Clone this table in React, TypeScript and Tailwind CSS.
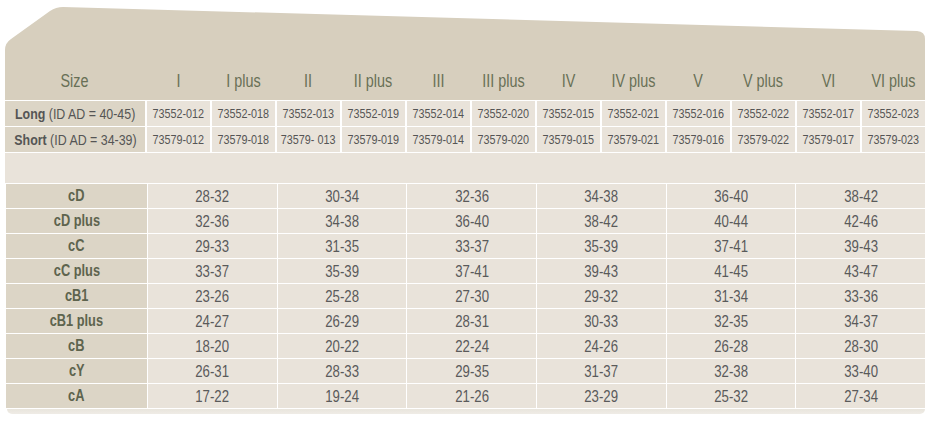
import React from "react";

const headers = ["I", "I plus", "II", "II plus", "III", "III plus", "IV", "IV plus", "V", "V plus", "VI", "VI plus"];
const longCodes = ["73552-012", "73552-018", "73552-013", "73552-019", "73552-014", "73552-020", "73552-015", "73552-021", "73552-016", "73552-022", "73552-017", "73552-023"];
const shortCodes = ["73579-012", "73579-018", "73579- 013", "73579-019", "73579-014", "73579-020", "73579-015", "73579-021", "73579-016", "73579-022", "73579-017", "73579-023"];

const rows: [string, string[]][] = [
  ["cD", ["28-32", "30-34", "32-36", "34-38", "36-40", "38-42"]],
  ["cD plus", ["32-36", "34-38", "36-40", "38-42", "40-44", "42-46"]],
  ["cC", ["29-33", "31-35", "33-37", "35-39", "37-41", "39-43"]],
  ["cC plus", ["33-37", "35-39", "37-41", "39-43", "41-45", "43-47"]],
  ["cB1", ["23-26", "25-28", "27-30", "29-32", "31-34", "33-36"]],
  ["cB1 plus", ["24-27", "26-29", "28-31", "30-33", "32-35", "34-37"]],
  ["cB", ["18-20", "20-22", "22-24", "24-26", "26-28", "28-30"]],
  ["cY", ["26-31", "28-33", "29-35", "31-37", "32-38", "33-40"]],
  ["cA", ["17-22", "19-24", "21-26", "23-29", "25-32", "27-34"]],
];

function C({ children }: { children: React.ReactNode }) {
  return <span className="inline-block scale-x-[0.8] whitespace-pre">{children}</span>;
}

export default function App() {
  return (
    <div
      className="w-[934px] h-[423px] bg-white overflow-hidden"
      style={{ fontFamily: '"Liberation Sans", Arial, sans-serif' }}
    >
      <div className="ml-[5px] w-[920px] flex flex-col gap-y-px">
        {/* Header */}
        <div className="relative h-[100px]">
          <svg className="absolute inset-0" width="920" height="100" viewBox="0 0 920 100">
            <path
              d="M0,100 L0,50 Q0,43 6,39 L45,11 Q51,7 58,7 L912,31 Q920,31.5 920,39 L920,100 Z"
              fill="#d7cfbe"
            />
          </svg>
          <div className="relative h-full grid grid-cols-[140px_repeat(12,minmax(0,1fr))] gap-x-[2px] items-end pb-[8px] text-[18px] leading-[22px] text-[#687056]">
            <div className="min-w-0 flex justify-center"><C>Size</C></div>
            {headers.map((h) => (
              <div key={h} className="min-w-0 flex justify-center"><C>{h}</C></div>
            ))}
          </div>
        </div>

        {/* Codes */}
        <div className="grid grid-cols-[140px_repeat(12,minmax(0,1fr))] grid-rows-[25px] gap-x-[2px] h-[25px] leading-[20px]">
          <div className="min-w-0 bg-[#dcd5c6] flex items-center justify-center text-[15.5px] text-[#555]">
            <C><span className="font-bold">Long</span> (ID AD = 40-45)</C>
          </div>
          {longCodes.map((c, i) => (
            <div key={i} className="min-w-0 bg-[#e9e3da] flex items-center justify-center text-[13.5px] text-[#555]"><C>{c}</C></div>
          ))}
        </div>
        <div className="grid grid-cols-[140px_repeat(12,minmax(0,1fr))] grid-rows-[25px] gap-x-[2px] h-[25px] leading-[20px]">
          <div className="min-w-0 bg-[#dcd5c6] flex items-center justify-center text-[15.5px] text-[#555]">
            <C><span className="font-bold">Short</span> (ID AD = 34-39)</C>
          </div>
          {shortCodes.map((c, i) => (
            <div key={i} className="min-w-0 bg-[#e9e3da] flex items-center justify-center text-[13.5px] text-[#555]"><C>{c}</C></div>
          ))}
        </div>

        {/* spacer band */}
        <div className="h-[30px] bg-[#e9e3da]" />

        {/* Data rows */}
        <div className="ml-px flex flex-col gap-y-px">
          {rows.map(([label, vals]) => (
            <div key={label} className="grid grid-cols-[141px_repeat(6,minmax(0,1fr))] grid-rows-[24px] gap-x-px h-[24px] leading-[20px]">
              <div className="min-w-0 bg-[#dcd5c6] flex items-center justify-center text-[16px] font-bold text-[#5e644e]"><C>{label}</C></div>
              {vals.map((v, i) => (
                <div key={i} className="min-w-0 bg-[#e9e3da] flex items-center justify-center text-[16.5px] text-[#5a5a5a]"><C>{v}</C></div>
              ))}
            </div>
          ))}
          <div className="ml-px h-[5px] rounded-b-[6px] bg-gradient-to-b from-[#e9e5dd] to-[#efece6]" />
        </div>
      </div>
    </div>
  );
}
